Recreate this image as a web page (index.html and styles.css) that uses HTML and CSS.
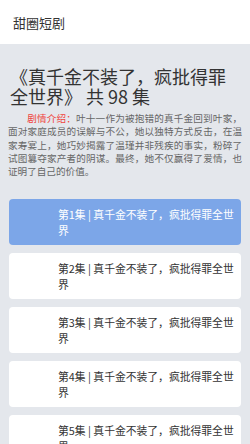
FILE: index.html
```html
<!DOCTYPE html>
<html lang="zh-CN">
<head>
    <meta charset="UTF-8">
    <meta name="viewport" content="width=device-width, initial-scale=1.0">
    <title>甜圈短剧</title>
    <link rel="stylesheet" href="styles.css">
</head>
<body>
    <header class="topbar">
        <span class="brand">甜圈短剧</span>
    </header>

    <main class="drama">
        <h1 class="drama-title">《真千金不装了，疯批得罪全世界》 共 98 集</h1>

        <p class="drama-intro"><span class="intro-label">剧情介绍：</span>叶十一作为被抱错的真千金回到叶家，面对家庭成员的误解与不公，她以独特方式反击，在温家寿宴上，她巧妙揭露了温瑾并非残疾的事实，粉碎了试图篡夺家产者的阴谋。最终，她不仅赢得了爱情，也证明了自己的价值。</p>

        <ul class="episode-list">
            <li class="episode active">第1集 | 真千金不装了，疯批得罪全世界</li>
            <li class="episode">第2集 | 真千金不装了，疯批得罪全世界</li>
            <li class="episode">第3集 | 真千金不装了，疯批得罪全世界</li>
            <li class="episode">第4集 | 真千金不装了，疯批得罪全世界</li>
            <li class="episode">第5集 | 真千金不装了，疯批得罪全世界</li>
        </ul>
    </main>
</body>
</html>
```

FILE: styles.css
```css
body, h1, p, ul {
    margin: 0;
    padding: 0;
}

body {
    font-family: 'Noto Sans CJK SC', 'Noto Sans', sans-serif;
    background-color: #e4e7ec;
    color: #333;
    overflow: hidden;
}

.topbar {
    background-color: white;
    height: 44px;
    display: flex;
    align-items: center;
    padding-left: 13px;
}

.brand {
    font-size: 13px;
    color: #333;
}

.drama {
    padding: 22px 9px 0;
}

.drama-title {
    font-size: 18px;
    font-weight: normal;
    line-height: 20px;
    color: #333;
    padding-left: 1px;
}

.drama-intro {
    font-size: 9.6px;
    line-height: 13.3px;
    color: #666;
    text-indent: 2em;
    margin: 6px -1px 0;
    text-align: justify;
}

.intro-label {
    color: #f0443c;
}

.episode-list {
    list-style: none;
    margin-top: 21px;
}

.episode {
    background-color: white;
    border-radius: 4px;
    padding: 7px 4px 7px 49px;
    font-size: 10.8px;
    line-height: 16px;
    color: #333;
    margin-bottom: 8px;
}

.episode.active {
    background-color: #7ca6e8;
    color: white;
}
```
